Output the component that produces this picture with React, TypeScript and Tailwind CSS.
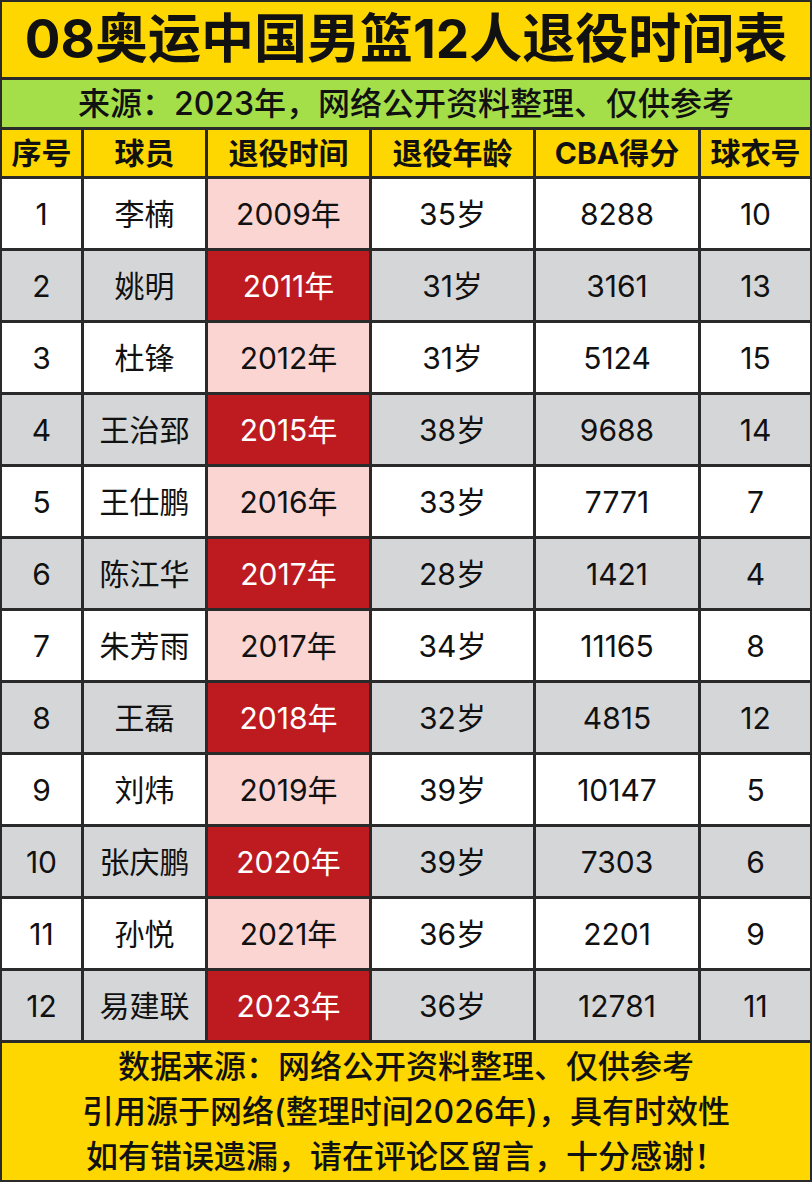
import React from "react";

const rows: [string, string, string, string, string, string][] = [
  ["1", "李楠", "2009年", "35岁", "8288", "10"],
  ["2", "姚明", "2011年", "31岁", "3161", "13"],
  ["3", "杜锋", "2012年", "31岁", "5124", "15"],
  ["4", "王治郅", "2015年", "38岁", "9688", "14"],
  ["5", "王仕鹏", "2016年", "33岁", "7771", "7"],
  ["6", "陈江华", "2017年", "28岁", "1421", "4"],
  ["7", "朱芳雨", "2017年", "34岁", "11165", "8"],
  ["8", "王磊", "2018年", "32岁", "4815", "12"],
  ["9", "刘炜", "2019年", "39岁", "10147", "5"],
  ["10", "张庆鹏", "2020年", "39岁", "7303", "6"],
  ["11", "孙悦", "2021年", "36岁", "2201", "9"],
  ["12", "易建联", "2023年", "36岁", "12781", "11"],
];

const headers = ["序号", "球员", "退役时间", "退役年龄", "CBA得分", "球衣号"];

const font = { fontFamily: '"Inter", "Noto Sans CJK SC", sans-serif' };

export default function App() {
  return (
    <div
      className="w-[812px] h-[1182px] bg-[#2a2a2a] p-[2px] flex flex-col gap-[3px] text-[#111]"
      style={font}
    >
      <div className="h-[75px] bg-[#fed700] flex items-center justify-center text-[53px] font-bold leading-none whitespace-nowrap">
        08奥运中国男篮12人退役时间表
      </div>
      <div className="h-[47px] bg-[#a4df4a] flex items-center justify-center text-[32px] font-medium leading-none whitespace-nowrap">
        来源：2023年，网络公开资料整理、仅供参考
      </div>
      <div className="grid grid-cols-[79px_121px_161px_161px_162px_109px] gap-[3px]">
        {headers.map((h) => (
          <div
            key={h}
            className="h-[46px] bg-[#fed700] flex items-center justify-center text-[30px] font-bold leading-none whitespace-nowrap"
          >
            {h}
          </div>
        ))}
        {rows.map((r, i) => {
          const even = i % 2 === 1;
          const base = even ? "bg-[#d5d6d8]" : "bg-white";
          return r.map((c, j) => {
            let cls = base + " text-[#111]";
            if (j === 2) cls = even ? "bg-[#be1b21] text-white" : "bg-[#fad5d2] text-[#111]";
            return (
              <div
                key={i + "-" + j}
                className={
                  "h-[69px] flex items-center justify-center text-[30px] leading-none " + cls
                }
              >
                {c}
              </div>
            );
          });
        })}
      </div>
      <div className="flex-1 bg-[#fed700] flex flex-col items-center justify-center text-[32px] font-medium leading-[45px] whitespace-nowrap">
        <div>数据来源：网络公开资料整理、仅供参考</div>
        <div>引用源于网络(整理时间2026年)，具有时效性</div>
        <div>如有错误遗漏，请在评论区留言，十分感谢！</div>
      </div>
    </div>
  );
}
